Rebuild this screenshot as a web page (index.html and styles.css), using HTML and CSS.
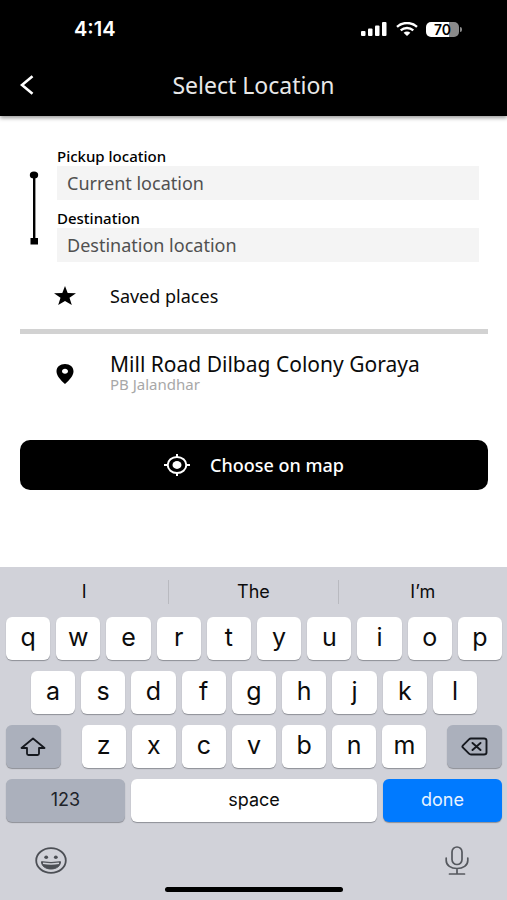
FILE: index.html
```html
<!DOCTYPE html>
<html lang="en">
<head>
<meta charset="utf-8">
<meta name="viewport" content="width=device-width, initial-scale=1">
<title>Select Location</title>
<link rel="stylesheet" href="styles.css">
</head>
<body>
<header class="top">
  <div class="status">
    <span class="time">4:14</span>
    <div class="indicators">
      <svg width="27" height="14" viewBox="0 0 27 14" fill="#fff" aria-hidden="true">
        <rect x="0" y="9" width="4.500" height="5" rx="1"/><rect x="7" y="6.500" width="4.500" height="7.500" rx="1"/><rect x="14" y="3.500" width="4.500" height="10.500" rx="1"/><rect x="21" y="0" width="4.500" height="14" rx="1"/>
      </svg>
      <svg width="22" height="14" viewBox="0 0 22 14" aria-hidden="true">
        <path d="M1 4.800C6.500-.3 15.500-.3 21 4.800" fill="none" stroke="#fff" stroke-width="2.300"/>
        <path d="M4.700 8.300c3.600-3.100 9-3.100 12.600 0" fill="none" stroke="#fff" stroke-width="2.300"/>
        <path d="M7.600 10.800c1.900-1.700 4.900-1.700 6.800 0L11 14z" fill="#fff"/>
      </svg>
      <div class="battery"><span class="charge">70</span></div>
    </div>
  </div>
  <div class="bar">
    <button class="back" type="button" aria-label="Back">
      <svg width="14" height="20" viewBox="0 0 14 20" fill="none" stroke="#fff" stroke-width="2.600" aria-hidden="true"><path d="M12.500 1.200 2 10l10.500 8.800"/></svg>
    </button>
    <h1>Select Location</h1>
  </div>
</header>

<main>
  <form class="route">
    <svg class="track" width="10" height="74" viewBox="0 0 10 74" aria-hidden="true">
      <ellipse cx="5" cy="4" rx="4.200" ry="3.500"/><rect x="4" y="4" width="2.400" height="64"/><rect x="1.500" y="67" width="7.500" height="6.500"/>
    </svg>
    <div class="fields">
      <label for="pickup">Pickup location</label>
      <input id="pickup" type="text" placeholder="Current location">
      <label for="destination">Destination</label>
      <input id="destination" type="text" placeholder="Destination location">
    </div>
  </form>
  <a class="entry saved" href="#saved">
    <svg width="22" height="19" viewBox="0 0 22 19" aria-hidden="true"><path d="m11 0 2.700 6.900 8.300.4-6.500 4.500 2.300 7.200-6.800-4.100L4.200 19l2.300-7.200L0 7.300l8.300-.4z"/></svg>
    <span>Saved places</span>
  </a>
  <a class="entry place" href="#place">
    <svg width="18" height="20" viewBox="0 0 18 20" aria-hidden="true"><path fill-rule="evenodd" d="M9 0c4.900 0 8.500 3.100 8.500 7.200C17.500 11.800 13.600 15.700 9 20 4.400 15.700.5 11.800.5 7.200.5 3.100 4.100 0 9 0m0 4.700c-1.700 0-3 1.100-3 2.500s1.300 2.500 3 2.500 3-1.100 3-2.500-1.300-2.500-3-2.500"/></svg>
    <span class="address"><strong>Mill Road Dilbag Colony Goraya</strong><small>PB Jalandhar</small></span>
  </a>
  <button class="choose" type="button">
    <svg width="26" height="22" viewBox="0 0 26 22" fill="none" stroke="#fff" stroke-width="2" aria-hidden="true"><ellipse cx="13" cy="11" rx="9.300" ry="8"/><ellipse cx="13" cy="11" rx="4.500" ry="3.900" fill="#fff" stroke="none"/><path d="M13 0v3M13 19v3M0 11h4M22 11h4"/></svg>
    Choose on map
  </button>
</main>

<section class="keyboard" aria-label="Keyboard">
  <div class="suggestions">
    <button type="button">I</button><button type="button">The</button><button type="button">I’m</button>
  </div>
  <div class="keys">
    <button type="button">q</button><button type="button">w</button><button type="button">e</button><button type="button">r</button><button type="button">t</button><button type="button">y</button><button type="button">u</button><button type="button">i</button><button type="button">o</button><button type="button">p</button>
  </div>
  <div class="keys inset">
    <button type="button">a</button><button type="button">s</button><button type="button">d</button><button type="button">f</button><button type="button">g</button><button type="button">h</button><button type="button">j</button><button type="button">k</button><button type="button">l</button>
  </div>
  <div class="keys shifted">
    <button class="gray" type="button" aria-label="Shift">
      <svg width="26" height="20" viewBox="0 0 26 20" fill="none" stroke="#15181e" stroke-width="1.800" stroke-linejoin="round" aria-hidden="true"><path d="M13 1.500 1.500 11H7v5.500q0 1.500 1.500 1.500h9q1.500 0 1.500-1.500V11h5.500z"/></svg>
    </button>
    <div class="keys middle">
      <button type="button">z</button><button type="button">x</button><button type="button">c</button><button type="button">v</button><button type="button">b</button><button type="button">n</button><button type="button">m</button>
    </div>
    <button class="gray" type="button" aria-label="Delete">
      <svg width="27" height="19" viewBox="0 0 27 19" fill="none" stroke="#15181e" stroke-width="1.900" stroke-linejoin="round" stroke-linecap="round" aria-hidden="true"><path d="M10 1.500h13q2.500 0 2.500 2v12q0 2-2.500 2H10q-1.200 0-2-.8L2 10.700q-1.200-1.200 0-2.400l6-6q.8-.8 2-.8M11.500 6l8 7M19.500 6l-8 7"/></svg>
    </button>
  </div>
  <div class="keys words">
    <button class="gray" type="button">123</button>
    <button type="button">space</button>
    <button class="done" type="button">done</button>
  </div>
  <div class="tools">
    <button type="button" aria-label="Emoji">
      <svg width="32" height="27" viewBox="0 0 32 27" fill="none" stroke="#4c4f55" stroke-width="1.800" aria-hidden="true"><ellipse cx="16" cy="13.500" rx="14.800" ry="12.300"/><ellipse cx="11.200" cy="10.300" rx="1.900" ry="1.800" fill="#4c4f55" stroke="none"/><ellipse cx="20.800" cy="10.300" rx="1.900" ry="1.800" fill="#4c4f55" stroke="none"/><path d="M6.500 14.700q9.500 1.600 19 0C25.500 19 21.500 22 16 22s-9.500-3-9.500-7.300z" fill="#4c4f55" stroke-width="1"/><path d="M8 16.300q8 1.300 16 0" stroke="#d1d2d9" stroke-width="1.500"/></svg>
    </button>
    <button type="button" aria-label="Dictation">
      <svg width="24" height="29" viewBox="0 0 24 29" fill="none" stroke="#55585e" stroke-width="1.700" stroke-linecap="round" aria-hidden="true"><rect x="7" y="1" width="10" height="17.500" rx="5"/><path d="M1.200 12v2.500c0 5 4.800 8 10.800 8s10.800-3 10.800-8V12M12 22.500V28M4.500 28h15"/></svg>
    </button>
  </div>
  <div class="home"></div>
</section>
</body>
</html>
```
FILE: styles.css
```css
* {
  box-sizing: border-box;
}

body {
  margin: 0;
  min-height: 100vh;
  display: flex;
  flex-direction: column;
  background: #fff;
  color: #0b0b0b;
  font-family: "Noto Sans", sans-serif;
}

button {
  margin: 0;
  padding: 0;
  border: 0;
  background: none;
  color: inherit;
  font: inherit;
}

svg {
  flex: none;
  display: block;
}

.top {
  background: #000;
  color: #fff;
  box-shadow: 0 2px 4px rgba(0, 0, 0, 0.4);
}

.status {
  display: flex;
  justify-content: space-between;
  align-items: center;
  height: 58px;
  padding: 0 48px 0 74px;
}

.time {
  font: 600 20px/24px Inter, sans-serif;
}

.indicators {
  display: flex;
  align-items: center;
  gap: 8px;
}

.battery {
  position: relative;
  width: 33px;
  border-radius: 5px;
  background: linear-gradient(90deg, #fff 70%, #8a8a8a 70%);
  color: #000;
  text-align: center;
}

.battery::after {
  content: "";
  position: absolute;
  right: -3px;
  top: 5px;
  width: 2px;
  height: 5px;
  border-radius: 0 2px 2px 0;
  background: #8a8a8a;
}

.charge {
  display: block;
  font: 600 14px/15px Inter, sans-serif;
}

.bar {
  display: grid;
  grid-template-columns: 40px 1fr 40px;
  align-items: center;
  height: 58px;
  padding-bottom: 4px;
}

.back {
  display: flex;
  height: 40px;
  padding-left: 20px;
  align-items: center;
}

h1 {
  margin: 0;
  font-size: 23px;
  line-height: 30px;
  font-weight: 400;
  text-align: center;
  color: #e8e8e8;
}

main {
  padding: 31px 19px 24px 20px;
}

.route {
  display: flex;
  align-items: center;
  gap: 18px;
  padding: 0 9px;
}

.track {
  margin-top: 7px;
}

.fields {
  flex: 1;
  display: flex;
  flex-direction: column;
}

label {
  font-size: 15px;
  line-height: 19px;
  font-weight: 500;
  color: #000;
}

input {
  width: 100%;
  height: 34px;
  padding: 0 10px;
  border: 0;
  border-radius: 0;
  background: #f4f4f4;
  color: #444;
  font: 18px/24px "Noto Sans", sans-serif;
}

input + label {
  margin-top: 9px;
}

input::placeholder {
  color: #505050;
  opacity: 1;
}

.entry {
  display: grid;
  grid-template-columns: 90px 1fr;
  align-items: center;
  color: inherit;
  text-decoration: none;
}

.entry svg {
  justify-self: center;
}

.saved {
  height: 72px;
  border-bottom: 5px solid #d2d2d2;
  font-size: 18px;
}

.place {
  height: 80px;
}

.address {
  display: grid;
  padding-bottom: 3px;
}

.address strong {
  font-size: 21px;
  line-height: 24px;
  font-weight: 400;
}

.address small {
  font-size: 15px;
  line-height: 17px;
  color: #a8a8a8;
}

.choose {
  display: flex;
  justify-content: center;
  align-items: center;
  gap: 20px;
  width: 100%;
  height: 50px;
  margin-top: 26px;
  border-radius: 10px;
  background: #000;
  color: #fff;
  font-size: 18px;
  font-weight: 500;
}

.keyboard {
  display: flex;
  flex-direction: column;
  gap: 11px;
  margin-top: auto;
  padding: 0 5px 8px 6px;
  background: #d1d2d9;
  color: #0c0c0c;
  font-family: Inter, sans-serif;
}

.suggestions {
  display: flex;
  align-items: center;
  height: 39px;
  margin: 0 -5px 0 -6px;
  padding-top: 10px;
  font-size: 18px;
}

.suggestions button {
  flex: 1;
  height: 24px;
}

.suggestions button + button {
  border-left: 1px solid #b9bac0;
}

.keys {
  display: flex;
  gap: 6px;
}

.keys button {
  flex: 1;
  display: flex;
  justify-content: center;
  align-items: center;
  height: 43px;
  padding-bottom: 3px;
  border-radius: 6px;
  background: #fff;
  box-shadow: 0 1px 1px #8d8f96;
  font-size: 25px;
}

.inset {
  padding: 0 5%;
}

.shifted {
  justify-content: space-between;
  gap: 21px;
}

.middle {
  flex: 1;
}

.keys .gray {
  background: #abb0bc;
  color: #202329;
}

.shifted > .gray {
  flex: 0 0 11%;
  padding: 0;
}

.words button {
  flex: 0 0 24%;
  font-size: 18px;
}

.words button:nth-child(2) {
  flex: 1;
}

.keys .done {
  background: #007aff;
  color: #e9f3ff;
}

.tools {
  display: flex;
  justify-content: space-between;
  align-items: center;
  height: 54px;
  padding: 0 33px 0 29px;
}

.home {
  width: 36%;
  height: 5px;
  margin: -11px auto 0;
  border-radius: 3px;
  background: #000;
}
```
